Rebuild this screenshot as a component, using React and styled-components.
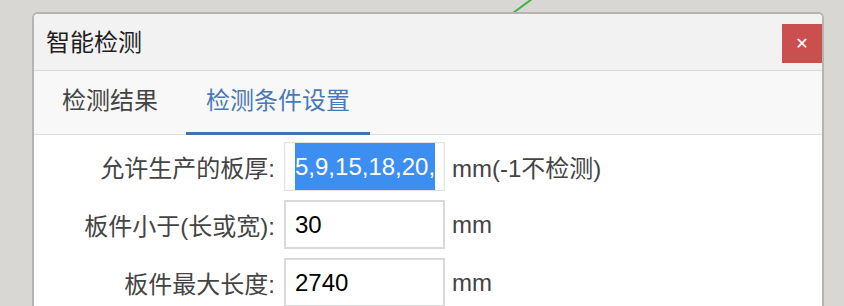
import styled, {createGlobalStyle} from "styled-components";

const GlobalStyle = createGlobalStyle`
  html, body {
    margin: 0;
    padding: 0;
    background: #d8d7d3;
    overflow: hidden;
  }
  body {
    font-family: "Liberation Sans", "Noto Sans CJK SC", sans-serif;
  }
`

const Desk = styled.div`
  position: relative;
  height: 306px;
  padding: 12px 20px 0 32px;
  box-sizing: border-box;
  overflow: hidden;
`

const Stroke = styled.svg`
  position: absolute;
  left: 510px;
  top: 0;
`

const Window = styled.div`
  position: relative;
  width: 792px;
  height: 320px;
  box-sizing: border-box;
  border: 2px solid #b4b4b2;
  border-bottom: none;
  border-radius: 6px 6px 0 0;
  background: #fff;
  overflow: hidden;
`

const TitleBar = styled.div`
  display: flex;
  align-items: flex-start;
  justify-content: space-between;
  height: 56px;
  background: #f2f2f2;
  border-bottom: 1px solid #dcdcdc;
`

const Title = styled.div`
  padding: 14px 0 0 12px;
  font-size: 24px;
  line-height: 30px;
  color: #1e1e1e;
`

const CloseButton = styled.button`
  margin-top: 10px;
  width: 40px;
  height: 39px;
  border: none;
  padding: 0;
  background: #c9504f;
  color: #fff;
  font-family: "DejaVu Sans", sans-serif;
  font-size: 16px;
  font-weight: bold;
  line-height: 39px;
`

const TabBar = styled.div`
  display: flex;
  gap: 8px;
  height: 63px;
  padding-left: 8px;
  background: #f8f8f8;
  border-bottom: 1px solid #dedede;
`

const Tab = styled.div`
  padding: 0 20px;
  font-size: 24px;
  line-height: 60px;
  color: ${(p) => (p.active ? "#4a78b5" : "#444")};
  border-bottom: 3px solid ${(p) => (p.active ? "#4472b1" : "transparent")};
  margin-bottom: -1px;
`

const Form = styled.div`
  display: flex;
  flex-direction: column;
  gap: 9px;
  padding-top: 7px;
`

const Row = styled.div`
  display: flex;
  align-items: center;
  height: 49px;
`

const Label = styled.div`
  width: 241px;
  margin-right: 9px;
  text-align: right;
  font-size: 24px;
  color: #444;
`

const Field = styled.div`
  width: 161px;
  height: 49px;
  box-sizing: border-box;
  padding: 0 ${(p) => (p.focused ? "10px" : "9px")};
  border: ${(p) => (p.focused ? "1px solid #e2e2e2" : "2px solid #d9d9d9")};
  box-shadow: ${(p) => (p.focused ? "inset 0 0 3px rgba(0,0,0,0.08)" : "none")};
  font-size: 24px;
  line-height: ${(p) => (p.focused ? "47px" : "45px")};
  color: #000;
  white-space: nowrap;
  overflow: hidden;
`

const Selected = styled.span`
  display: inline-block;
  background: #3d8ef1;
  color: #fff;
  line-height: 47px;
`

const Unit = styled.div`
  margin-left: 7px;
  font-size: 24px;
  color: #444;
`

const rows = [
    {label: "允许生产的板厚:", value: "5,9,15,18,20,", unit: "mm(-1不检测)", selected: true},
    {label: "板件小于(长或宽):", value: "30", unit: "mm"},
    {label: "板件最大长度:", value: "2740", unit: "mm"},
];

const App = () => {
    return (
        <>
            <GlobalStyle/>
            <Desk>
                <Stroke width="30" height="16" viewBox="0 0 30 16">
                    <line x1="3" y1="13" x2="22" y2="-1" stroke="#3db545" strokeWidth="2"/>
                </Stroke>
                <Window>
                    <TitleBar>
                        <Title>智能检测</Title>
                        <CloseButton>✕</CloseButton>
                    </TitleBar>
                    <TabBar>
                        <Tab>检测结果</Tab>
                        <Tab active>检测条件设置</Tab>
                    </TabBar>
                    <Form>
                        {rows.map((row) => (
                            <Row key={row.label}>
                                <Label>{row.label}</Label>
                                <Field focused={row.selected}>
                                    {row.selected ? <Selected>{row.value}</Selected> : row.value}
                                </Field>
                                <Unit>{row.unit}</Unit>
                            </Row>
                        ))}
                    </Form>
                </Window>
            </Desk>
        </>
    );
};

export default App;
